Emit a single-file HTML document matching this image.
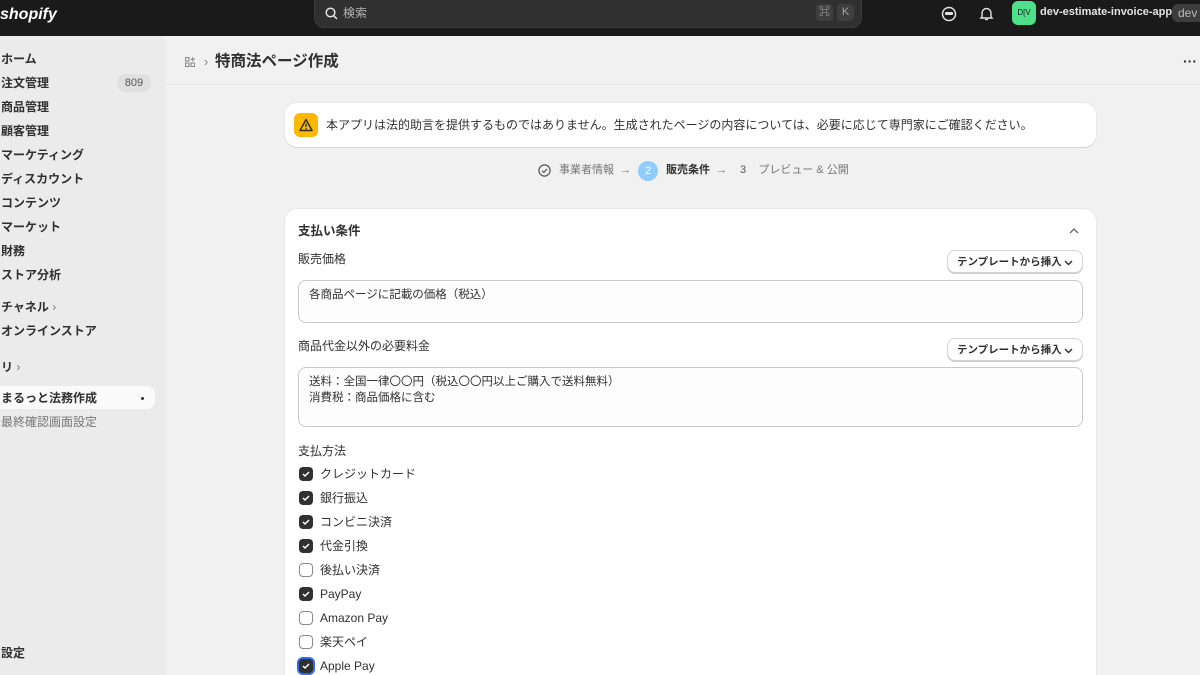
<!DOCTYPE html>
<html style="width:1200px;height:675px;overflow:hidden"><head><meta charset="utf-8"><style>
*{box-sizing:border-box;margin:0;padding:0}
body{width:1200px;height:675px;overflow:hidden;background:#f1f1f1;font-family:"Liberation Sans","Noto Sans CJK JP",sans-serif;color:#303030;font-size:12px;position:relative;line-height:1.2}
.top{position:absolute;left:0;top:0;width:1200px;height:36px;background:#1a1a1a}
.logo{position:absolute;left:0;top:5px;color:#fff;font-weight:bold;font-style:italic;font-size:16px}
.search{position:absolute;left:314px;top:0;width:548px;height:28px;background:#303030;border-radius:0 0 10px 10px;border:1px solid #3a3a3a;border-top:none}
.search span.t{position:absolute;left:28px;top:6px;color:#b5b5b5;font-size:12px}
.kbd{position:absolute;top:4px;width:17px;height:17px;background:#3f3f3f;border-radius:4px;color:#aaa;font-size:11px;text-align:center;line-height:17px}
.side{position:absolute;left:0;top:36px;width:165px;height:639px;background:#ebebeb}
.ni{position:absolute;left:1px;font-size:12px;font-weight:bold;color:#303030}
.badge{position:absolute;left:117px;width:34px;height:18px;background:#e0e0e0;border-radius:8px;font-size:11px;color:#555;text-align:center;line-height:18px}
.sel{position:absolute;left:0;width:155px;height:23px;background:#fafafa;border-radius:0 8px 8px 0}
.card{position:absolute;background:#fff;border-radius:12px;box-shadow:0 1px 0 #d4d4d4,0 0 0 1px #e8e8e8}
.btn{position:absolute;left:947px;width:136px;height:23px;border:1px solid #d4d4d4;border-radius:8px;background:#fff;font-size:10.5px;font-weight:bold;padding:5px 0 0 9px;box-shadow:0 1px 0 #ccc;white-space:nowrap}
.btn svg{position:absolute;right:9px;top:9px}
.ta{position:absolute;left:298px;width:785px;border:1px solid #c9c9c9;border-radius:8px;background:#fdfdfd;padding:6px 10px;font-size:11.5px;line-height:16px}
.lbl{position:absolute;left:298px;font-size:12px}
.cb{position:absolute;left:299px;width:14px;height:14px;border-radius:4px;background:#303030}
.cb.off{background:#fff;border:1px solid #8a8a8a}
.cb svg{position:absolute;left:2px;top:2px}
.cl{position:absolute;left:320px;font-size:12px}
</style></head><body>
<div class="top">
<div class="logo">shopify</div>
<div class="search">
<svg style="position:absolute;left:10px;top:7px" width="13" height="13" viewBox="0 0 13 13"><circle cx="5.5" cy="5.5" r="4.3" fill="none" stroke="#e3e3e3" stroke-width="1.5"/><path d="M8.7 8.7L12 12" stroke="#e3e3e3" stroke-width="1.5"/></svg>
<span class="t">検索</span>
<div class="kbd" style="left:501px">⌘</div><div class="kbd" style="left:522px">K</div>
</div>
<svg style="position:absolute;left:941px;top:6px" width="16" height="16" viewBox="0 0 16 16"><circle cx="8" cy="8" r="6.5" fill="none" stroke="#e3e3e3" stroke-width="1.5"/><rect x="4" y="6" width="8" height="3" rx="1" fill="#e3e3e3"/></svg>
<svg style="position:absolute;left:979px;top:6px" width="15" height="15" viewBox="0 0 15 15"><path d="M3 11V7a4.5 4.5 0 0 1 9 0v4l1 1H2z" fill="none" stroke="#e3e3e3" stroke-width="1.4"/><path d="M6 13.5h3" stroke="#e3e3e3" stroke-width="1.4"/></svg>
<div style="position:absolute;left:1012px;top:1px;width:24px;height:24px;background:#4ee08a;border-radius:6px;font-size:8px;color:#1a1a1a;text-align:center;line-height:24px">D[V</div>
<div style="position:absolute;left:1040px;top:6px;color:#e3e3e3;font-size:11px;font-weight:bold;white-space:nowrap">dev-estimate-invoice-app</div>
<div style="position:absolute;left:1172px;top:4px;width:40px;height:18px;background:#3d3d3d;border-radius:6px;color:#bbb;font-size:12px;padding:2px 0 0 6px">dev</div>
</div>
<div class="side">
<div class="ni" style="top:16px">ホーム</div>
<div class="ni" style="top:40px">注文管理</div>
<div class="badge" style="top:38px">809</div>
<div class="ni" style="top:64px">商品管理</div>
<div class="ni" style="top:88px">顧客管理</div>
<div class="ni" style="top:112px">マーケティング</div>
<div class="ni" style="top:136px">ディスカウント</div>
<div class="ni" style="top:160px">コンテンツ</div>
<div class="ni" style="top:184px">マーケット</div>
<div class="ni" style="top:208px">財務</div>
<div class="ni" style="top:232px">ストア分析</div>
<div class="ni" style="top:264px">チャネル <span style="color:#777;font-weight:normal">›</span></div>
<div class="ni" style="top:288px">オンラインストア</div>
<div class="ni" style="top:324px">リ <span style="color:#777;font-weight:normal">›</span></div>
<div class="sel" style="top:350px"></div>
<div class="ni" style="top:355px">まるっと法務作成</div>
<div style="position:absolute;left:141px;top:361px;width:3px;height:3px;background:#303030;border-radius:50%"></div>
<div class="ni" style="top:379px;color:#777;font-weight:normal">最終確認画面設定</div>
<div class="ni" style="top:610px">設定</div>
</div>
<svg style="position:absolute;left:185px;top:57px" width="10" height="10" viewBox="0 0 10 10"><rect x="0.5" y="0.5" width="3.5" height="3.5" fill="none" stroke="#888"/><rect x="0.5" y="6" width="3.5" height="3.5" fill="none" stroke="#888"/><rect x="6" y="6" width="3.5" height="3.5" fill="none" stroke="#888"/><path d="M7.7 0v4.5M5.5 2.2h4.5" stroke="#888"/></svg>
<div style="position:absolute;left:204px;top:54px;color:#888;font-size:13px">›</div>
<div style="position:absolute;left:215px;top:53px;font-size:15.5px;font-weight:bold;color:#303030">特商法ページ作成</div>
<div style="position:absolute;left:1183px;top:53px;font-size:14px;font-weight:bold">···</div>
<div style="position:absolute;left:165px;top:84px;width:1035px;height:1px;background:#e8e8e8"></div>
<div class="card" style="left:285px;top:103px;width:811px;height:44px"></div>
<div style="position:absolute;left:294px;top:113px;width:24px;height:24px;background:#ffb800;border-radius:6px"><svg style="position:absolute;left:5px;top:5px" width="14" height="14" viewBox="0 0 14 14"><path d="M7 1.5L13 12.5H1z" fill="none" stroke="#303030" stroke-width="1.5" stroke-linejoin="round"/><path d="M7 5.5v3.5" stroke="#303030" stroke-width="1.4"/><circle cx="7" cy="10.7" r=".8" fill="#303030"/></svg></div>
<div style="position:absolute;left:326px;top:118px;font-size:12px">本アプリは法的助言を提供するものではありません。生成されたページの内容については、必要に応じて専門家にご確認ください。</div>
<svg style="position:absolute;left:538px;top:164px" width="13" height="13" viewBox="0 0 13 13"><circle cx="6.5" cy="6.5" r="5.6" fill="none" stroke="#555" stroke-width="1.2"/><path d="M4 6.7l1.8 1.7L9 5" fill="none" stroke="#555" stroke-width="1.2"/></svg>
<div style="position:absolute;left:559px;top:164px;font-size:11px;color:#777">事業者情報 &nbsp;→</div>
<div style="position:absolute;left:638px;top:161px;width:20px;height:20px;background:#8fcdfc;border-radius:50%;color:#fff;font-size:11px;text-align:center;line-height:20px">2</div>
<div style="position:absolute;left:666px;top:164px;font-size:11px;font-weight:bold">販売条件 <span style="font-weight:normal;color:#777">&nbsp;→</span></div>
<div style="position:absolute;left:740px;top:164px;font-size:11px;color:#555">3 &nbsp;&nbsp;&nbsp;<span style="color:#777">プレビュー &amp; 公開</span></div>
<div class="card" style="left:285px;top:209px;width:811px;height:480px"></div>
<div style="position:absolute;left:298px;top:224px;font-size:12.5px;font-weight:bold">支払い条件</div>
<svg style="position:absolute;left:1069px;top:228px" width="10" height="6" viewBox="0 0 10 6"><path d="M1 5l4-4 4 4" fill="none" stroke="#666" stroke-width="1.3"/></svg>
<div class="lbl" style="top:252px">販売価格</div>
<div class="btn" style="top:250px">テンプレートから挿入<svg width="9" height="6" viewBox="0 0 9 6"><path d="M1 1l3.5 3.5L8 1" fill="none" stroke="#303030" stroke-width="1.4"/></svg></div>
<div class="ta" style="top:280px;height:43px">各商品ページに記載の価格（税込）</div>
<div class="lbl" style="top:339px">商品代金以外の必要料金</div>
<div class="btn" style="top:338px">テンプレートから挿入<svg width="9" height="6" viewBox="0 0 9 6"><path d="M1 1l3.5 3.5L8 1" fill="none" stroke="#303030" stroke-width="1.4"/></svg></div>
<div class="ta" style="top:367px;height:60px">送料：全国一律〇〇円（税込〇〇円以上ご購入で送料無料）<br>消費税：商品価格に含む</div>
<div class="lbl" style="top:444px">支払方法</div>
<div class="cb" style="top:467px"><svg width="10" height="10"><path d="M2 5l2 2 4-4" fill="none" stroke="#fff" stroke-width="1.5"/></svg></div><div class="cl" style="top:467px">クレジットカード</div>
<div class="cb" style="top:491px"><svg width="10" height="10"><path d="M2 5l2 2 4-4" fill="none" stroke="#fff" stroke-width="1.5"/></svg></div><div class="cl" style="top:491px">銀行振込</div>
<div class="cb" style="top:515px"><svg width="10" height="10"><path d="M2 5l2 2 4-4" fill="none" stroke="#fff" stroke-width="1.5"/></svg></div><div class="cl" style="top:515px">コンビニ決済</div>
<div class="cb" style="top:539px"><svg width="10" height="10"><path d="M2 5l2 2 4-4" fill="none" stroke="#fff" stroke-width="1.5"/></svg></div><div class="cl" style="top:539px">代金引換</div>
<div class="cb off" style="top:563px"></div><div class="cl" style="top:563px">後払い決済</div>
<div class="cb" style="top:587px"><svg width="10" height="10"><path d="M2 5l2 2 4-4" fill="none" stroke="#fff" stroke-width="1.5"/></svg></div><div class="cl" style="top:587px">PayPay</div>
<div class="cb off" style="top:611px"></div><div class="cl" style="top:611px">Amazon Pay</div>
<div class="cb off" style="top:635px"></div><div class="cl" style="top:635px">楽天ペイ</div>
<div class="cb" style="top:659px;box-shadow:0 0 0 2px #2a6ee8"><svg width="10" height="10"><path d="M2 5l2 2 4-4" fill="none" stroke="#fff" stroke-width="1.5"/></svg></div><div class="cl" style="top:659px">Apple Pay</div>
</body></html>
